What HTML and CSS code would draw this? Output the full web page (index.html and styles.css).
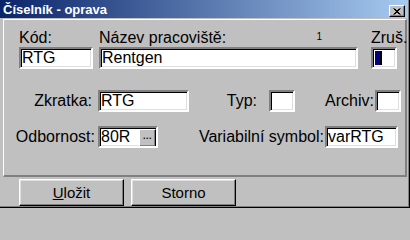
FILE: index.html
```html
<!DOCTYPE html>
<html lang="cs">
<head>
<meta charset="utf-8">
<title>Číselník - oprava</title>
<link rel="stylesheet" href="styles.css">
</head>
<body>
<div class="window">
  <div class="frame">
    <div class="titlebar">
      <span class="title">Číselník - oprava</span>
      <span class="close"><svg width="8" height="7" viewBox="0 0 8 7"><path d="M0.5 0.5 L6.5 6.5 M1.5 0.5 L7.5 6.5 M6.5 0.5 L0.5 6.5 M7.5 0.5 L1.5 6.5" stroke="#000" stroke-width="1" fill="none"/></svg></span>
    </div>
    <div class="panel">
      <div class="row row1">
        <div class="col col-kod">
          <div class="lbl">Kód:</div>
          <div class="edit w-kod">RTG</div>
        </div>
        <div class="col col-nazev">
          <div class="lbl lbl-nazev"><span>Název pracoviště:</span><span class="tiny">1</span></div>
          <div class="edit w-nazev">Rentgen</div>
        </div>
        <div class="col col-zrus">
          <div class="lbl">Zruš.</div>
          <div class="edit w-box"><span class="sel"></span></div>
        </div>
      </div>
      <div class="row row2">
        <div class="rlbl w-l1 pr6"><span>Zkratka:</span></div>
        <div class="edit w-zkr">RTG</div>
        <div class="rlbl w-l2 pr12"><span>Typ:</span></div>
        <div class="edit w-box"></div>
        <div class="rlbl w-l2 pr1"><span>Archiv:</span></div>
        <div class="edit w-box"></div>
      </div>
      <div class="row row3">
        <div class="rlbl w-l1 pr2"><span>Odbornost:</span></div>
        <div class="edit w-odb"><span class="grow">80R</span><span class="dots">...</span></div>
        <div class="rlbl w-l3 pr1"><span>Variabilní symbol:</span></div>
        <div class="edit w-var">varRTG</div>
      </div>
    </div>
    <div class="buttons">
      <button class="btn"><u>U</u>ložit</button>
      <button class="btn">Storno</button>
    </div>
  </div>
</div>
</body>
</html>
```
FILE: styles.css
```css
html, body {
  margin: 0;
  padding: 0;
  background: #c0c0c0;
}
body {
  font-family: "Liberation Sans", Arial, sans-serif;
  font-size: 16px;
  color: #000;
}
.window {
  width: 409px;
  height: 207px;
  border-right: 1px solid #000;
  border-bottom: 1px solid #000;
}
.frame {
  height: 206px;
  border-right: 1px solid #808080;
  border-bottom: 1px solid #808080;
  display: flex;
  flex-direction: column;
}
.titlebar {
  height: 18px;
  background: linear-gradient(to right, #0a246a, #a6caf0);
  display: flex;
  align-items: flex-start;
  justify-content: space-between;
}
.title {
  color: #fff;
  font-weight: bold;
  font-size: 13px;
  line-height: 19px;
  padding-left: 3px;
  white-space: nowrap;
}
.close {
  width: 14px;
  height: 10px;
  margin: 5px 3px 0 0;
  background: #c0c0c0;
  border: 1px solid;
  border-color: #fff #000 #000 #fff;
  box-shadow: inset -1px -1px 0 #808080;
  display: flex;
  align-items: center;
  justify-content: center;
}
.close svg { display: block; }
.panel {
  margin: 1px 1px 0 3px;
  height: 150px;
  border-style: solid;
  border-width: 1px 2px 2px 1px;
  border-color: #fff #808080 #808080 #fff;
  padding: 9px 0 0 15px;
  box-sizing: content-box;
}
.row { display: flex; }
.row2 { margin-top: 21px; align-items: center; }
.row3 { margin-top: 14px; align-items: center; }
.col { display: flex; flex-direction: column; }
.col-kod { width: 80px; }
.col-nazev { width: 272px; }
.col-zrus { width: 30px; }
.lbl {
  height: 18px;
  line-height: 18px;
  white-space: nowrap;
}
.lbl-nazev {
  display: flex;
  justify-content: space-between;
  padding-right: 49px;
}
.tiny {
  font-size: 10px;
  line-height: 10px;
  margin-top: 3px;
}
.edit {
  height: 18px;
  line-height: 18px;
  background: #fff;
  border: 2px solid;
  border-color: #808080 #fff #fff #808080;
  box-shadow: inset 1px 1px 0 #000, inset -1px -1px 0 #dfdfdf;
  padding: 0 0 0 1px;
  white-space: nowrap;
  overflow: hidden;
  box-sizing: content-box;
}
.w-kod { width: 69px; }
.w-nazev { width: 254px; }
.w-box { width: 21px; }
.w-zkr { width: 86px; }
.w-odb { width: 55px; display: flex; }
.w-var { width: 68px; }
.sel {
  display: block;
  width: 5px;
  height: 14px;
  margin: 2px 0 0 1px;
  background: #000080;
  border-right: 2px solid #000;
}
.grow { flex: 1; }
.dots {
  width: 15px;
  height: 16px;
  margin: 1px 0 0 0;
  background: #c0c0c0;
  border: 1px solid;
  border-color: #fff #000 #000 #fff;
  box-shadow: inset -1px -1px 0 #808080;
  font-size: 9px;
  font-weight: bold;
  line-height: 12px;
  text-align: center;
  letter-spacing: 0.5px;
}
.rlbl {
  display: flex;
  justify-content: flex-end;
  white-space: nowrap;
  box-sizing: border-box;
}
.w-l1 { width: 79px; }
.w-l2 { width: 80px; }
.w-l3 { width: 167px; }
.pr1 { padding-right: 1px; }
.pr2 { padding-right: 3px; }
.pr6 { padding-right: 6px; }
.pr12 { padding-right: 12px; }
.buttons {
  display: flex;
  gap: 7px;
  margin-top: 2px;
  padding-left: 19px;
}
.btn {
  width: 105px;
  height: 27px;
  margin: 0;
  padding: 0;
  background: #c0c0c0;
  font-family: "Liberation Sans", Arial, sans-serif;
  font-size: 15px;
  color: #000;
  border: 1px solid;
  border-color: #fff #000 #000 #fff;
  box-shadow: inset -1px -1px 0 #808080, inset 1px 1px 0 #dfdfdf;
  border-radius: 0;
}
```
